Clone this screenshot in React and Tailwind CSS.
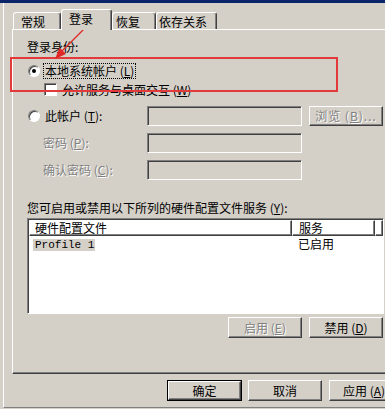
import React from 'react';

// Windows classic 3D edges
const raised = 'border border-t-white border-l-white border-r-[#404040] border-b-[#404040] shadow-[inset_-1px_-1px_0_#808080]';
const sunken = 'border border-t-[#808080] border-l-[#808080] border-r-white border-b-white shadow-[inset_1px_1px_0_#404040]';
const dim = 'text-[#808080] [text-shadow:1px_1px_0_#fff]';

function Radio({ checked }) {
    return (
        <div className={`w-[12px] h-[12px] shrink-0 rounded-full bg-white flex items-center justify-center ${sunken}`}>
            {checked && <div className="w-[4px] h-[4px] rounded-full bg-black" />}
        </div>
    );
}

function Button({ children, disabled, isDefault, className = '', inner = 'justify-center' }) {
    return (
        <div className={`${isDefault ? 'border border-black' : ''} ${className}`}>
            <div className={`h-full flex items-center bg-[#d4d0c8] ${inner} ${raised} ${disabled ? dim : ''}`}>
                {children}
            </div>
        </div>
    );
}

function Tab({ children, selected, className = '' }) {
    return (
        <div
            className={`flex items-center rounded-t-[3px] bg-[#d4d0c8] border-t border-l border-t-white border-l-white border-r border-r-[#404040] shadow-[inset_-1px_0_0_#808080] ${selected ? 'h-[21px] -mb-px pb-[2px]' : 'h-[17px] pt-[1px]'} ${className}`}
        >
            {children}
        </div>
    );
}

const Key = ({ k }) => (
    <>
        {' '}(<span className="underline">{k}</span>)
    </>
);

export default function App() {
    return (
        <div className="relative w-[385px] h-[409px] overflow-hidden bg-[#d4d0c8] text-[12px] leading-[14px] text-black font-['Noto_Sans_CJK_SC','Noto_Sans',sans-serif]">
            {/* title bar edge */}
            <div className="h-[3px] bg-[#0a246a]" />

            <div className="ml-[3px] h-[405px] w-[420px] border-l border-l-white border-b border-b-[#808080] flex flex-col">
                {/* tabs */}
                <div className="relative z-10 h-[26px] shrink-0 flex items-end pl-[9px]">
                    <Tab className="w-[48px] pl-[7px]">常规</Tab>
                    <Tab selected className="w-[51px] pl-[7px]">登录</Tab>
                    <Tab className="w-[44px] pl-[3px]">恢复</Tab>
                    <Tab className="w-[61px] pl-[2px]">依存关系</Tab>
                </div>

                {/* tab page */}
                <div className={`ml-[8px] w-[395px] h-[345px] shrink-0 flex flex-col ${raised}`}>
                    <div className="mt-[10px] pl-[14px]">登录身份:</div>

                    <div className="mt-[9px] h-[16px] flex items-center pl-[15px]">
                        <Radio checked />
                        <div className="ml-[3px] h-[16px] px-[1px] flex items-center border border-dotted border-black">
                            本地系统帐户<Key k="L" />
                        </div>
                    </div>

                    <div className="mt-[3px] h-[15px] flex items-center pl-[31px]">
                        <div className={`w-[13px] h-[13px] bg-white ${sunken}`} />
                        <div className="ml-[5px]">允许服务与桌面交互<Key k="W" /></div>
                    </div>

                    <div className="mt-[9px] h-[20px] flex items-center pl-[15px]">
                        <div className="w-[119px] flex items-center">
                            <Radio />
                            <div className="ml-[5px]">此帐户<Key k="T" />:</div>
                        </div>
                        <div className={`w-[155px] h-[20px] ${sunken}`} />
                        <Button disabled className="ml-[7px] w-[74px] h-[20px]">
                            <span className="tracking-[1px]">浏览<Key k="B" />...</span>
                        </Button>
                    </div>

                    <div className="mt-[7px] h-[20px] flex items-center pl-[15px]">
                        <div className={`w-[119px] pl-[15px] ${dim}`}>密码<Key k="P" />:</div>
                        <div className={`w-[155px] h-[20px] ${sunken}`} />
                    </div>

                    <div className="mt-[7px] h-[20px] flex items-center pl-[15px]">
                        <div className={`w-[119px] pl-[15px] ${dim}`}>确认密码<Key k="C" />:</div>
                        <div className={`w-[155px] h-[20px] ${sunken}`} />
                    </div>

                    <div className="mt-[21px] pl-[14px]">您可启用或禁用以下所列的硬件配置文件服务<Key k="Y" />:</div>

                    {/* profile list */}
                    <div className="mt-[3px] ml-[14px] w-[357px] h-[96px] bg-white border border-t-[#808080] border-l-[#808080] border-r-white border-b-white shadow-[inset_1px_1px_0_#404040]">
                        <div className="ml-[1px] mt-[1px] h-[16px] flex leading-[14px]">
                            <div className={`w-[263px] pl-[5px] flex items-center ${raised}`}>硬件配置文件</div>
                            <div className={`w-[83px] pl-[6px] flex items-center ${raised}`}>服务</div>
                            <div className={`flex-1 ${raised}`} />
                        </div>
                        <div className="mt-[1px] h-[13px] flex items-center">
                            <div className="ml-[5px] w-[264px]">
                                <span className="inline-block h-[12px] pl-[2px] pr-[1px] bg-[#d4d0c8] font-['Liberation_Mono',monospace] text-[11px] leading-[12px]">
                                    Profile 1
                                </span>
                            </div>
                            <div className="pl-[1px] leading-[13px]">已启用</div>
                        </div>
                    </div>

                    <div className="mt-[3px] h-[21px] flex gap-[7px] pl-[215px]">
                        <Button disabled className="w-[74px] h-[21px]">启用<Key k="E" /></Button>
                        <Button className="w-[74px] h-[21px]">禁用<Key k="D" /></Button>
                    </div>
                </div>

                {/* dialog buttons */}
                <div className="mt-[6px] h-[21px] flex pl-[163px]">
                    <Button isDefault className="w-[75px] h-[21px]">确定</Button>
                    <Button className="ml-[6px] w-[74px] h-[21px]">取消</Button>
                    <Button className="ml-[7px] w-[75px] h-[21px]" inner="justify-start pl-[13px]">应用<Key k="A" /></Button>
                </div>
            </div>

            {/* red annotation */}
            <div className="absolute left-[10px] top-[57px] w-[328px] h-[35px] border-2 border-[#e23a3a]" />
            <svg className="absolute left-0 top-0" width="110" height="70" viewBox="0 0 110 70">
                <line x1="97" y1="16" x2="62" y2="51" stroke="#e02828" strokeWidth="1.2" />
                <polygon points="55,59 59.5,47.5 66,54" fill="#e02828" />
            </svg>
        </div>
    );
}
